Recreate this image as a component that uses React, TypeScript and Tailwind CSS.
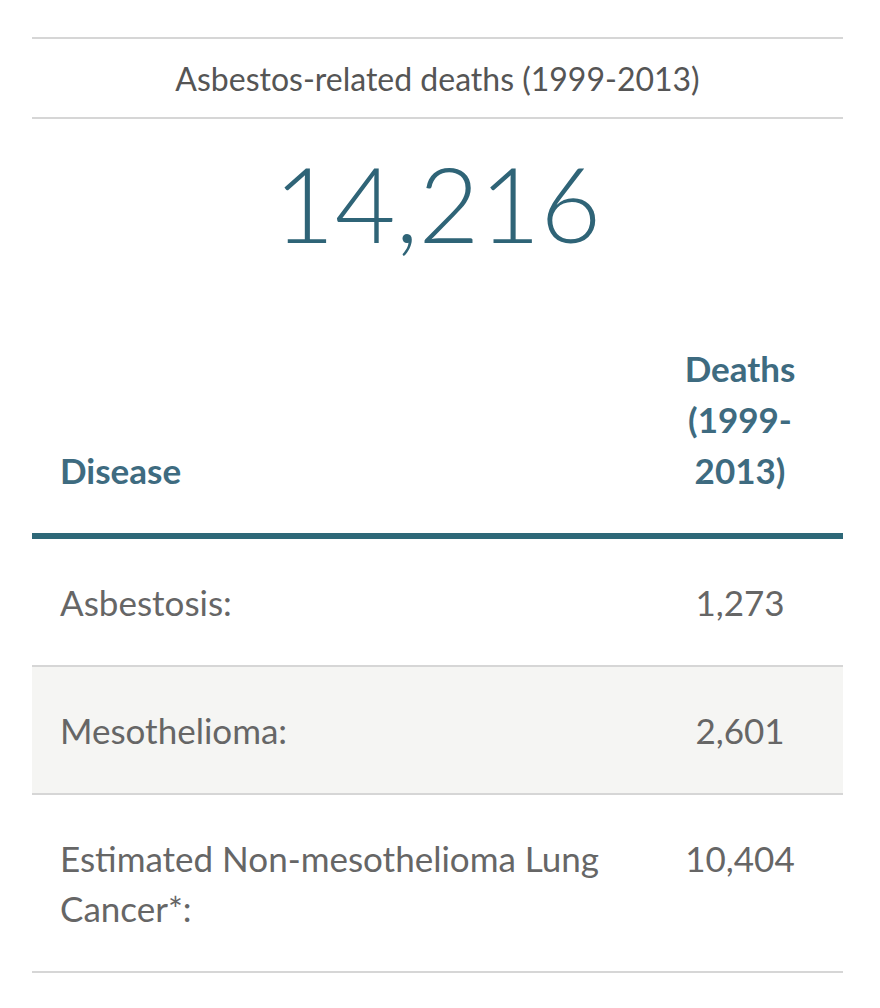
export default function App() {
  const rows = [
    { disease: "Asbestosis:", deaths: "1,273" },
    { disease: "Mesothelioma:", deaths: "2,601" },
    { disease: "Estimated Non-mesothelioma Lung Cancer*:", deaths: "10,404" },
  ]

  return (
    <div className="min-h-screen bg-white pt-[37px] px-[32px] font-['Lato',sans-serif]">
      <div className="w-[811px]">
        <div className="border-y-2 border-[#d6d6d6] h-[82px] flex items-center justify-center">
          <h2 className="text-[32px] text-[#555] pt-[2px]">Asbestos-related deaths (1999-2013)</h2>
        </div>
        <div className="text-center text-[105px] font-light leading-none text-[#2f6477] pt-[31px] pb-[88px]">14,216</div>

        <table className="w-full border-collapse">
          <thead>
            <tr className="border-b-[6px] border-[#2e6878]">
              <th className="text-left align-bottom pl-[28px] pb-[37px] text-[35px] font-bold text-[#3e6b80] leading-[51px]">
                Disease
              </th>
              <th className="w-[206px] text-center align-bottom px-[38px] pb-[37px] text-[35px] font-bold text-[#3e6b80] leading-[51px]">
                Deaths (1999-2013)
              </th>
            </tr>
          </thead>
          <tbody>
            {rows.map((r, i) => (
              <tr key={r.disease} className={`border-b-2 border-[#d6d6d6] ${i === 1 ? "bg-[#f5f5f3]" : ""}`}>
                <td className="align-top pl-[28px] pr-[20px] py-[38px] text-[35px] text-[#666] leading-[50px]">{r.disease}</td>
                <td className="align-top text-center px-[10px] py-[38px] text-[35px] text-[#666] leading-[50px]">{r.deaths}</td>
              </tr>
            ))}
          </tbody>
        </table>
      </div>
    </div>
  )
}
